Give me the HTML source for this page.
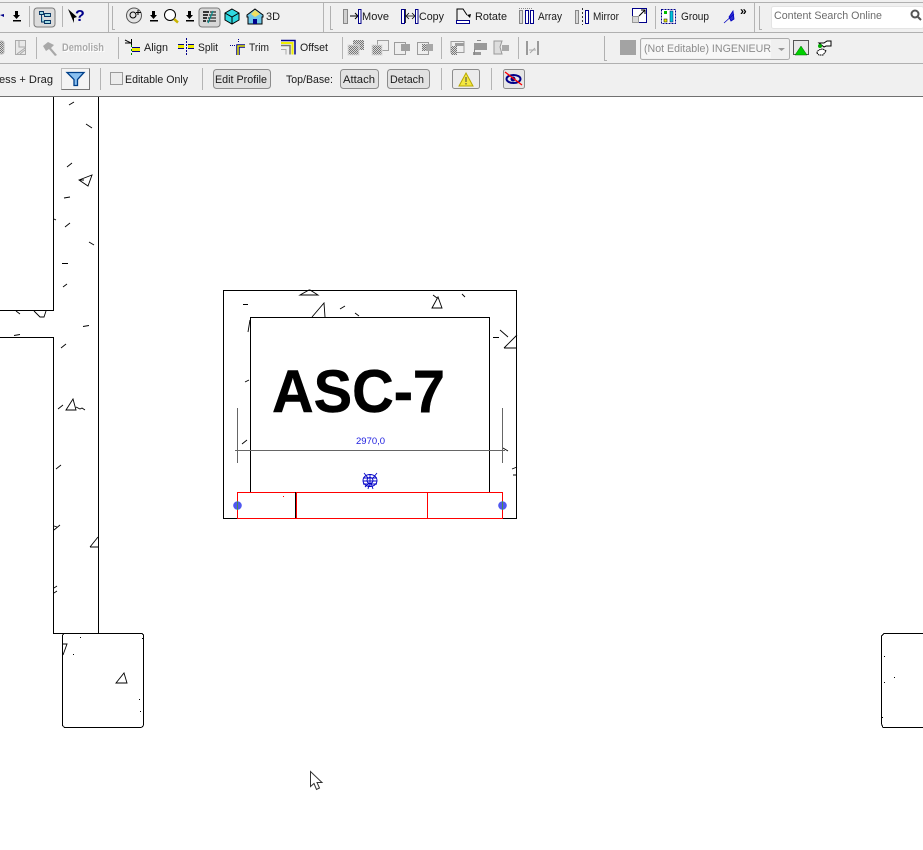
<!DOCTYPE html>
<html><head><meta charset="utf-8"><style>
html,body{margin:0;padding:0;background:#fff;width:923px;height:850px;overflow:hidden}
svg{display:block}
text{font-family:"Liberation Sans",sans-serif}
.t{font-size:11px;fill:#1a1a1a}
.l{stroke:#000;stroke-width:1;fill:none;shape-rendering:crispEdges}
.m{stroke:#000;stroke-width:.9;fill:none}
.s{stroke:#b4b4b4;stroke-width:1;shape-rendering:crispEdges;fill:none}
.h{stroke:#b0b0b0;stroke-width:1;shape-rendering:crispEdges;fill:none}
.g{fill:#9a9a9a}
</style></head><body>
<svg width="923" height="850" viewBox="0 0 923 850" xmlns="http://www.w3.org/2000/svg">
<defs>
<pattern id="d" width="2" height="2" patternUnits="userSpaceOnUse"><rect width="2" height="2" fill="#d8d8d8"/><rect width="1" height="1" fill="#777"/><rect x="1" y="1" width="1" height="1" fill="#777"/></pattern>
</defs>
<!-- toolbar bg -->
<rect x="0" y="0" width="923" height="96" fill="#f0f0f0"/>
<rect x="0" y="2" width="923" height="1" fill="#b0b0b0"/>
<rect x="0" y="32" width="923" height="1" fill="#b0b0b0"/>
<rect x="0" y="63" width="923" height="1" fill="#b0b0b0"/>
<rect x="0" y="96" width="923" height="1" fill="#707070"/>

<!-- row 1 separators -->
<path class="s" d="M108.500 3V32M323.500 3V32M754.500 3V32M29.500 6V27M62.500 6V27M655.500 6V29"/>
<path class="h" d="M112.500 6V29.500H115M330.500 6V29.500H333M759.500 6V29.500H762"/>
<!-- row 1 icons -->
<path d="M0 15l4-1v3z" fill="#00008a"/>
<g fill="#000"><path d="M15 11h3v4h2l-3.500 4-3.500-4h2zM13 20h8v1.500h-8z"/></g>
<rect x="34" y="8" width="21" height="19" rx="3" fill="#dcdcdc" stroke="#7a7a7a"/>
<path d="M39.500 11.500h4v3h-4zM41.500 14.500v7.500h3M44.500 13.500h6v3h-6zM44.500 20.500h6v3h-6z" fill="#9fd8e0" stroke="#003060" stroke-width=".9"/>
<path d="M68 9l9 8-3 1v5z" fill="#000"/>
<text x="75" y="21" font-size="16" font-weight="bold" fill="#00008a">?</text>

<circle cx="134" cy="15.500" r="7.500" fill="#e3e3e3" stroke="#555"/>
<circle cx="133" cy="15" r="3" fill="none" stroke="#000"/>
<path d="M138 10v5M136 12.500h5" stroke="#000"/>
<g fill="#000"><path d="M152 11h3v4h2l-3.500 4-3.500-4h2zM150 20h8v1.500h-8z"/><path d="M188 11h3v4h2l-3.500 4-3.500-4h2zM186 20h8v1.500h-8z"/></g>
<circle cx="170" cy="15" r="5.500" fill="#fff" stroke="#000"/>
<path d="M174 19l4 3.500" stroke="#c9b400" stroke-width="2.500"/>
<rect x="199" y="8" width="21" height="19" rx="3" fill="#d8d8d8" stroke="#7a7a7a"/>
<path d="M203 12h6M203 15h5M203 18h4M203 21h3" stroke="#000" stroke-width="1.500"/>
<path d="M210 12h6M209 15h7M208 18h8M207 21h9" stroke="#000"/>
<path d="M213 11l-5 12" stroke="#008a8a" stroke-width="1.200"/>
<path d="M232 9l7 4v7l-7 4-7-4v-7z" fill="#30d8e0" stroke="#000"/>
<path d="M225 13l7 4 7-4M232 17v7" stroke="#000" fill="none"/>
<path d="M255 9l8 6v2h-1v7h-14v-7h-1v-2z" fill="#70c8e8" stroke="#000"/>
<path d="M255 10l5 4-5 3-4-3z" fill="#f0e060"/>
<rect x="253" y="19" width="4" height="5" fill="#00008a"/>
<text x="266" y="20" class="t" font-size="12" textLength="14" lengthAdjust="spacingAndGlyphs">3D</text>

<rect x="343.500" y="9.500" width="4" height="14" fill="#d0d0d0" stroke="#888"/>
<path d="M350 16h7M355 13l3 3-3 3" stroke="#000" fill="none"/>
<rect x="358.500" y="9.500" width="2.500" height="14" fill="#fff" stroke="#00008a"/>
<text x="362" y="20" class="t" textLength="27" lengthAdjust="spacingAndGlyphs">Move</text>
<rect x="401.500" y="9.500" width="3" height="14" fill="#fff" stroke="#00008a"/>
<path d="M407 16h7M409 13l-3 3 3 3M412 13l3 3-3 3M405.500 9v14" stroke="#000" fill="none" stroke-width=".8"/>
<rect x="415.500" y="9.500" width="2.500" height="14" fill="#fff" stroke="#00008a"/>
<text x="419" y="20" class="t" textLength="25" lengthAdjust="spacingAndGlyphs">Copy</text>
<path d="M457 20v-11h6l4 6" fill="none" stroke="#000"/>
<path d="M471 14l-4 1 3 3z" fill="#000"/>
<rect x="456.500" y="20.500" width="13" height="3" fill="#fff" stroke="#00008a"/>
<text x="475" y="20" class="t" textLength="32" lengthAdjust="spacingAndGlyphs">Rotate</text>
<path d="M519 8.500h14" stroke="#888" stroke-dasharray="1 1"/>
<rect x="519.500" y="10.500" width="3" height="13" fill="#d8d8d8" stroke="#888"/>
<rect x="525.500" y="10.500" width="3" height="13" fill="#fff" stroke="#00008a"/>
<rect x="530.500" y="10.500" width="3" height="13" fill="#fff" stroke="#00008a"/>
<text x="538" y="20" class="t" textLength="24" lengthAdjust="spacingAndGlyphs">Array</text>
<rect x="575.500" y="10.500" width="3" height="13" fill="#d8d8d8" stroke="#888"/>
<path d="M582.500 8v17" stroke="#333" stroke-dasharray="2 2"/>
<rect x="585.500" y="10.500" width="3" height="13" fill="#fff" stroke="#00008a"/>
<text x="593" y="20" class="t" textLength="26" lengthAdjust="spacingAndGlyphs">Mirror</text>
<rect x="632.500" y="8.500" width="14" height="14" fill="#fff" stroke="#00008a"/>
<rect x="632.500" y="16.500" width="6" height="6" fill="#d8d8d8" stroke="#999"/>
<path d="M639 16l6-6M641 10h4v4" stroke="#000" fill="none"/>
<rect x="661.500" y="9.500" width="14" height="14" fill="#fff" stroke="#00008a" stroke-dasharray="2 1"/>
<rect x="664" y="11" width="3" height="3" fill="#0b0"/>
<rect x="664" y="19" width="3" height="3" fill="#ee0" stroke="#000" stroke-width=".5"/>
<rect x="670" y="11" width="3" height="11" fill="#00c8d8" stroke="#006" stroke-width=".5"/>
<text x="681" y="20" class="t" textLength="28" lengthAdjust="spacingAndGlyphs">Group</text>
<path d="M724 23l10-9M729 17l4-6 1 8-3 2z" stroke="#0000c0" fill="#3030d0" stroke-width=".8"/>
<text x="740" y="15" font-size="12" font-weight="bold" fill="#000">»</text>
<rect x="771.500" y="6.500" width="152" height="22" rx="2" fill="#fff" stroke="#e4e4e4"/>
<text x="774" y="19" font-size="11" fill="#6d6d6d" textLength="108" lengthAdjust="spacingAndGlyphs">Content Search Online</text>
<circle cx="915" cy="14" r="3.500" fill="none" stroke="#555" stroke-width="2"/>
<path d="M918 17l3 3" stroke="#555" stroke-width="2"/>

<!-- row 2 -->
<path class="s" d="M36.500 37V59M118.500 37V59M342.500 37V59M441.500 37V59M518.500 37V59"/>
<path class="h" d="M604.500 36V60.500H607"/>
<rect x="-3" y="41" width="7" height="13" rx="2" fill="url(#d)" stroke="#bbb"/>
<rect x="15.500" y="40.500" width="10" height="14" fill="#e8e8e8" stroke="#aaa"/>
<path d="M19 41v6h6M17 54l8-6M20 54l5-4" stroke="#a8a8a8" fill="none"/>
<path d="M43 46l5-4 6 3-3 3 6 7-2 1-6-7-3 2z" fill="#a8a8a8"/>
<text x="63" y="52" font-size="11" font-weight="bold" fill="#fff" textLength="42" lengthAdjust="spacingAndGlyphs">Demolish</text>
<text x="62" y="51" font-size="11" font-weight="bold" fill="#a9a9a9" textLength="42" lengthAdjust="spacingAndGlyphs">Demolish</text>

<path d="M125 40l6 3M125 43h6" stroke="#000" fill="none"/>
<path d="M131.500 39v6" stroke="#000"/><path d="M131.500 45v10" stroke="#080" stroke-dasharray="2 2"/>
<rect x="132" y="47" width="8" height="5" fill="#ee0"/>
<path d="M132 47.500h8M132 51.500h8" stroke="#00008a"/>
<text x="144" y="51" class="t" textLength="24" lengthAdjust="spacingAndGlyphs">Align</text>
<rect x="178" y="44" width="6" height="5" fill="#ee0"/><rect x="188" y="44" width="6" height="5" fill="#ee0"/>
<path d="M178 44.500h6M178 48.500h6M188 44.500h6M188 48.500h6" stroke="#00008a"/>
<path d="M186.500 38v17" stroke="#00008a" stroke-dasharray="2 1"/>
<text x="198" y="51" class="t" textLength="20" lengthAdjust="spacingAndGlyphs">Split</text>
<path d="M230 45.500h6M238.500 39v4" stroke="#00008a" stroke-dasharray="1 1" fill="none"/>
<path d="M238 55v-9h7" fill="none" stroke="#00008a" stroke-width="3.500"/><path d="M238 55v-9h7" fill="none" stroke="#ee0" stroke-width="1.500"/>
<text x="249" y="51" class="t" textLength="20" lengthAdjust="spacingAndGlyphs">Trim</text>
<path d="M281 40.500h14v14" fill="none" stroke="#00008a" stroke-width="1.500"/>
<path d="M281 43h11.500v11.500" fill="none" stroke="#ee0" stroke-width="2"/>
<path d="M281 45.500h9v9" fill="none" stroke="#777" stroke-width="1.500"/>
<path d="M281 49.500h5v5" fill="none" stroke="#aaa"/>
<text x="300" y="51" class="t" textLength="28" lengthAdjust="spacingAndGlyphs">Offset</text>
<!-- grey icons -->
<rect x="353" y="40" width="11" height="10" fill="url(#d)"/><rect x="348" y="45" width="11" height="10" fill="url(#d)" stroke="#ddd"/>
<rect x="377.500" y="40.500" width="11" height="10" fill="#eee" stroke="#a0a0a0"/><rect x="372" y="45" width="10" height="10" fill="url(#d)" stroke="#ddd"/>
<rect x="394.500" y="42.500" width="11" height="12" fill="#eee" stroke="#9c9c9c"/><rect x="401" y="44" width="9" height="7" fill="#a0a0a0"/>
<rect x="417.500" y="42.500" width="11" height="12" fill="#eee" stroke="#9c9c9c"/><rect x="422" y="44" width="4" height="7" fill="url(#d)"/><rect x="426" y="44" width="7" height="7" fill="#a8a8a8"/>
<rect x="451" y="41.500" width="13" height="11" fill="#eee" stroke="#9c9c9c"/><path d="M455 52v-6h9v-3h-9z" fill="#9c9c9c"/><rect x="451" y="46" width="6" height="9" fill="url(#d)"/>
<rect x="474" y="43" width="13" height="7" fill="#999"/><rect x="473" y="52" width="8" height="3" fill="#999"/><path d="M477 40.500h4M474.500 49v6" stroke="#888" fill="none"/>
<path d="M494 41h8l-2 6 2 7h-8z" fill="#ddd" stroke="#999"/><rect x="502" y="45" width="7" height="6" fill="#aaa"/>
<path d="M527 41v14M538 41v14" stroke="#9a9a9a" stroke-width="2" fill="none"/><path d="M529 50h7M530 53l5-5" stroke="#aaa" fill="none"/>
<rect x="620" y="40" width="16" height="15" fill="#a3a3a3"/>
<rect x="640.500" y="38.500" width="149" height="21" rx="2" fill="#f0f0f0" stroke="#acacac"/>
<rect x="642" y="40" width="129" height="18" fill="#f7f7f7"/>
<text x="644" y="52" font-size="11" fill="#8c8c8c" textLength="127" lengthAdjust="spacingAndGlyphs">(Not Editable) INGENIEUR</text>
<path d="M778 48h7l-3.500 3z" fill="#999"/>
<rect x="793.500" y="40.500" width="15" height="14" fill="#e8e8e8" stroke="#555"/>
<path d="M795 55l6-9 6 9z" fill="#00d000" stroke="#060" stroke-width=".5"/>
<path d="M819 43h5l3-2h4v5h-5l-2 1z" fill="#fff" stroke="#000"/>
<circle cx="820" cy="46" r="2" fill="#0a0"/>
<path d="M817 53c0-3 4-4 6-4l3 2-3 4h-4z" fill="#fff" stroke="#000" stroke-dasharray="1.500 .5"/>

<!-- row 3 -->
<text x="-1" y="83" class="t" textLength="54" lengthAdjust="spacingAndGlyphs">ess + Drag</text>
<rect x="61.500" y="68.500" width="28" height="21" fill="#f4f4f4" stroke="#bbb"/>
<path d="M89.500 68.500v21h-28" stroke="#777" fill="none"/>
<path d="M67 72.500h17l-6.500 7v6h-3.500v-6z" fill="#8ac0f0" stroke="#00408a" stroke-width="1.300"/>
<path class="s" d="M100.500 68V90M202.500 68V90M441.500 68V90M491.500 68V90"/>
<rect x="110.500" y="72.500" width="12" height="12" fill="#ececec" stroke="#9a9a9a"/>
<text x="125" y="83" class="t" textLength="63" lengthAdjust="spacingAndGlyphs">Editable Only</text>
<rect x="213.500" y="69.500" width="57" height="19" rx="3" fill="#e2e2e2" stroke="#8c8c8c"/>
<text x="215" y="83" class="t" textLength="52" lengthAdjust="spacingAndGlyphs">Edit Profile</text>
<text x="286" y="83" class="t" textLength="47" lengthAdjust="spacingAndGlyphs">Top/Base:</text>
<rect x="340.500" y="69.500" width="38" height="19" rx="3" fill="#e2e2e2" stroke="#8c8c8c"/>
<text x="343" y="83" class="t" textLength="32" lengthAdjust="spacingAndGlyphs">Attach</text>
<rect x="387.500" y="69.500" width="42" height="19" rx="3" fill="#e2e2e2" stroke="#8c8c8c"/>
<text x="390" y="83" class="t" textLength="34" lengthAdjust="spacingAndGlyphs">Detach</text>
<rect x="452.500" y="69.500" width="27" height="19" rx="2" fill="#ececec" stroke="#8c8c8c"/>
<path d="M466 73l7 13h-14z" fill="#f4e840" stroke="#b8a800"/>
<path d="M466 77v5M466 83v1.500" stroke="#444" fill="none"/>
<rect x="503.500" y="69.500" width="21" height="19" rx="2" fill="#e6e6e6" stroke="#8c8c8c"/>
<ellipse cx="513.500" cy="79" rx="7" ry="4" fill="none" stroke="#00008a" stroke-width="2"/>
<circle cx="513" cy="79" r="2.500" fill="#00008a"/>
<path d="M505 72l17 13" stroke="#f00" stroke-width="1.300"/>

<!-- CAD: left walls -->
<g class="l">
<path d="M53.500 97V310.500H0M98.500 97V633.500M0 337.500H53.500V633.500H98.500"/>
<path d="M62.500 636.500Q62.500 633.500 65 633.500H141Q143.500 633.500 143.500 636V724Q143.500 727.500 140 727.500H66Q62.500 727.500 62.500 724Z"/>
<path d="M923 633.500H884L881.500 636V724L883 727.500H923"/>
<rect x="223.500" y="290.500" width="293" height="228"/>
<path d="M250.500 492V317.500H489.500V492"/>
</g>
<g class="m">
<path d="M69 105l5-3M86 124l6 4M67 167l5-4M79 180l13-5-4 11zM79 180l5 0M64 198l6-1M54 219l2 1M65 227l5-4M89 242l5 3M62 263.500h6M63 287l4-3M16 311l4 3M34 311l6 6h4l2-6M14 335.500l6-1M83 326.500l6-1M61 348l5-4"/>
<path d="M66 410l7-11 3 11zM76 407l4 2 2-1 3 2M58 409l5-4"/>
<path d="M56 469l5-4M54 530l6-5M54 526l3 1M90 547l8-10M90 547h8M54 588l3-2M54 593l3-2"/>
<path d="M63 644h4l-4 11M116 683l8-10 3 10z"/>
<path d="M300 295l9-5h1l8 5zM312 317l12-14 1 14M340 309l5-3M355 313l4 3M243 304.500h5M433 295l4 3M432 308l6-11 4 11zM462 294l3 3M493 337.500h6M500 330l8 7M504 348l13-13M504 348h13M250 320l-2 12M245 382l4-2M242 444l5-4M503 448l5 3M512 469l5-2M513 475h4"/>
</g>
<g fill="#000"><rect x="80" y="637" width="1" height="1"/><rect x="73" y="654" width="1" height="1"/><rect x="142" y="638" width="1" height="1"/><rect x="139" y="699" width="1" height="1"/><rect x="140" y="711" width="1" height="1"/><rect x="884" y="656" width="1" height="1"/><rect x="884" y="682" width="1" height="1"/><rect x="894" y="677" width="1" height="1"/><rect x="882" y="717" width="1" height="1"/></g>

<!-- ASC-7 -->
<text x="272" y="412" font-size="60" font-weight="bold" fill="#000" stroke="#000" stroke-width=".5" textLength="173" lengthAdjust="spacingAndGlyphs">ASC-7</text>
<!-- dimension -->
<path d="M237.500 408V463M502.500 408V463M235 450.500H505" stroke="#666" fill="none" shape-rendering="crispEdges"/>
<text x="356" y="444" font-size="9.500" fill="#2020e0">2970,0</text>
<!-- mullion glyph -->
<g fill="none" stroke="#0000c8" stroke-width=".9">
<ellipse cx="370" cy="480.500" rx="7" ry="6"/><circle cx="370" cy="480.500" r="3"/>
<path d="M364 473l4 5M377 473l-4 5M363 481h14M365 487l4-4M373 489l-2-6M370 474v13M363 478h14M363 484h14M368 489l1-4"/>
</g>
<!-- red -->
<g fill="none" stroke="#f00" shape-rendering="crispEdges">
<rect x="237.500" y="492.500" width="265" height="26"/>
<path d="M296.500 492V518M427.500 492V518"/>
</g>
<rect x="295" y="492" width="1" height="26" fill="#000"/>
<rect x="283" y="496" width="1" height="1" fill="#f00"/>
<circle cx="237.500" cy="505.500" r="4.300" fill="#5058f0"/>
<circle cx="502.500" cy="505.500" r="4.300" fill="#5058f0"/>
<path d="M237.500 501v9M502.500 501v9" stroke="#4a8a50" shape-rendering="crispEdges"/>
<!-- cursor -->
<path d="M310.500 771.500v15l3.500-3 2.500 6 3-1.500-2.500-5.500h5z" fill="#fff" stroke="#333" stroke-width="1"/>
</svg>
</body></html>
